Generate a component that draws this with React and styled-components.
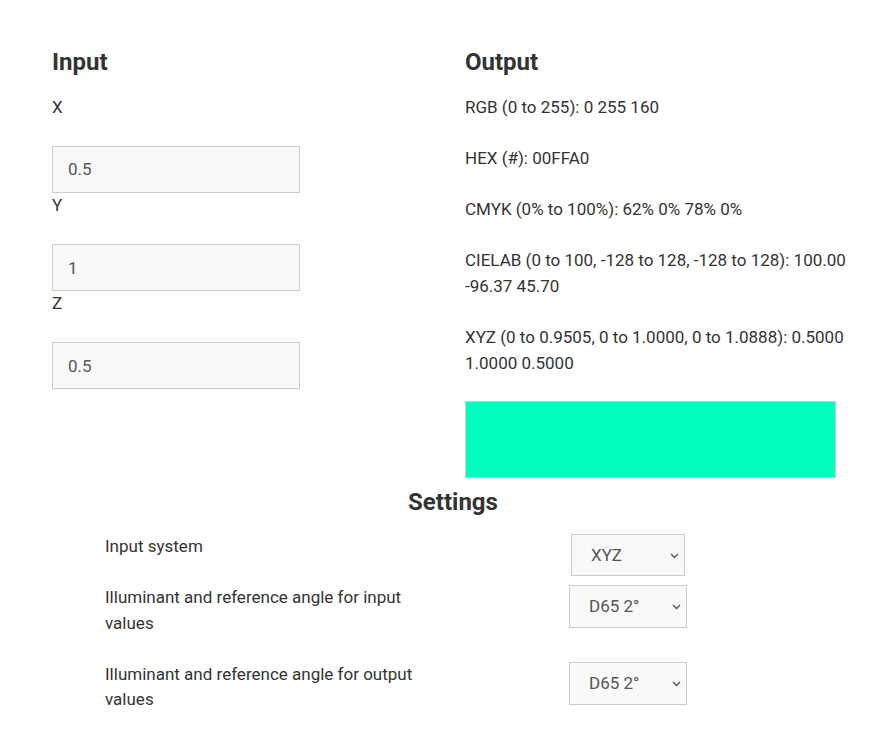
import React from "react";
import styled, { createGlobalStyle } from "styled-components";

const GlobalStyle = createGlobalStyle`
  body {
    margin: 0;
    background: #fff;
    color: #333;
    font-family: Roboto, "Liberation Sans", Arial, sans-serif;
    font-size: 17px;
    line-height: 25.6px;
  }
  * {
    box-sizing: border-box;
  }
`;

const Page = styled.div`
  width: 826px;
  margin-left: 40px;
  padding-top: 48px;
`;

const Columns = styled.div`
  display: grid;
  grid-template-columns: 413px 413px;
`;

const Column = styled.section`
  padding: 0 12px;
`;

const Heading = styled.h2`
  margin: 0 0 ${(props) => (props.center ? "17px" : "18px")};
  font-size: 24px;
  line-height: 28.8px;
  font-weight: 700;
  text-align: ${(props) => (props.center ? "center" : "left")};
`;

const Field = styled.div`
  display: flex;
  flex-direction: column;
  align-items: flex-start;
`;

const Label = styled.label`
  display: block;
  line-height: 25.6px;
  margin-bottom: 25.6px;
`;

const TextInput = styled.input`
  width: 248px;
  height: 47px;
  padding: 0 15px;
  background: #f9f9f9;
  border: 1px solid #ccc;
  border-radius: 0;
  color: #555;
  font-family: inherit;
  font-size: 17px;
  outline: none;
`;

const Result = styled.p`
  margin: 0 0 25.6px;
  line-height: 25.6px;
`;

const Swatch = styled.div`
  width: 371px;
  height: 77px;
  border: 1px solid #ccc;
  margin-top: -1px;
  margin-bottom: 10px;
`;

const SettingsTable = styled.div`
  display: grid;
  grid-template-columns: 359px 352px;
  margin-left: 53px;
  align-items: start;
`;

const SettingLabel = styled.p`
  margin: 0 0 25.6px;
  padding: 0 12px;
  line-height: 25.6px;
`;

const SelectCell = styled.div`
  display: flex;
  justify-content: center;
`;

const SelectWrap = styled.div`
  position: relative;
`;

const Select = styled.select`
  display: block;
  appearance: none;
  width: ${(props) => props.$w}px;
  height: ${(props) => props.$h}px;
  padding: 0 20px 0 19px;
  background: #f9f9f9;
  border: 1px solid #ccc;
  border-radius: 0;
  color: #555;
  font-family: Roboto, "Liberation Sans", Arial, sans-serif;
  font-size: 17px;
  outline: none;
`;

const Chevron = styled.svg`
  position: absolute;
  right: 6px;
  top: 50%;
  width: 9px;
  height: 6px;
  margin-top: -2px;
  pointer-events: none;
`;

const inputs = [
  { name: "X", value: "0.5" },
  { name: "Y", value: "1" },
  { name: "Z", value: "0.5" },
];

const results = [
  "RGB (0 to 255): 0 255 160",
  "HEX (#): 00FFA0",
  "CMYK (0% to 100%): 62% 0% 78% 0%",
  "CIELAB (0 to 100, -128 to 128, -128 to 128): 100.00 -96.37 45.70",
  "XYZ (0 to 0.9505, 0 to 1.0000, 0 to 1.0888): 0.5000 1.0000 0.5000",
];

const illuminants = ["D65 2°", "D50 2°", "A 2°", "C 2°", "E 2°"];

const settings = [
  {
    label: "Input system",
    options: ["XYZ", "RGB", "HEX", "CMYK", "CIELAB"],
    w: 114,
    h: 42,
  },
  {
    label: "Illuminant and reference angle for input values",
    options: illuminants,
    w: 118,
    h: 43,
  },
  {
    label: "Illuminant and reference angle for output values",
    options: illuminants,
    w: 118,
    h: 43,
  },
];

const App = () => {
  return (
    <>
      <GlobalStyle />
      <Page>
        <Columns>
          <Column>
            <Heading>Input</Heading>
            {inputs.map((item) => (
              <Field key={item.name}>
                <Label>{item.name}</Label>
                <TextInput type="text" defaultValue={item.value} />
              </Field>
            ))}
          </Column>
          <Column>
            <Heading>Output</Heading>
            {results.map((line) => (
              <Result key={line}>{line}</Result>
            ))}
            <Swatch style={{ background: "#00ffbe" }} />
          </Column>
        </Columns>
        <Heading center>Settings</Heading>
        <SettingsTable>
          {settings.map((row) => (
            <React.Fragment key={row.label}>
              <SettingLabel>{row.label}</SettingLabel>
              <SelectCell>
                <SelectWrap>
                  <Select $w={row.w} $h={row.h} defaultValue={row.options[0]}>
                    {row.options.map((opt) => (
                      <option key={opt}>{opt}</option>
                    ))}
                  </Select>
                  <Chevron viewBox="0 0 9 6">
                    <path
                      d="M1 1l3.5 3.5L8 1"
                      fill="none"
                      stroke="#555"
                      strokeWidth="1.4"
                    />
                  </Chevron>
                </SelectWrap>
              </SelectCell>
            </React.Fragment>
          ))}
        </SettingsTable>
      </Page>
    </>
  );
};

export default App;
